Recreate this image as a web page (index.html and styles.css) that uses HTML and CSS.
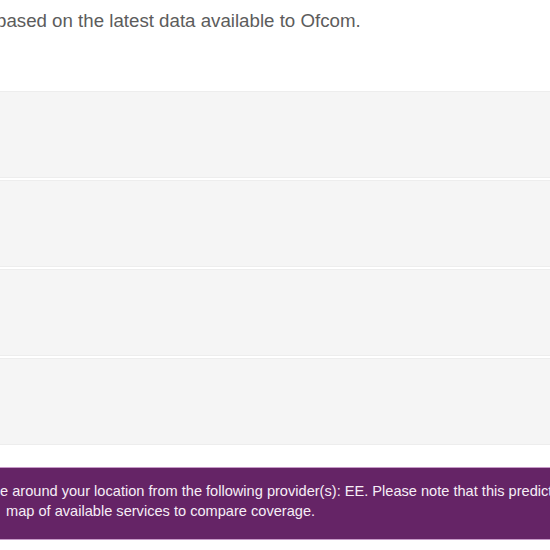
FILE: index.html
```html
<!DOCTYPE html>
<html>
<head>
<meta charset="utf-8">
<link rel="stylesheet" href="styles.css">
</head>
<body>
<div class="page">
  <p class="intro">based on the latest data available to Ofcom.</p>
  <div class="rows">
    <div class="row"></div>
    <div class="row"></div>
    <div class="row"></div>
    <div class="row"></div>
  </div>
  <div class="notice">
    <span class="line first">e around your location from the following provider(s): EE. Please note that this prediction</span>
    <span class="line second">map of available services to compare coverage.</span>
  </div>
</div>
</body>
</html>
```

FILE: styles.css
```css
html, body {
  margin: 0;
  padding: 0;
  background: #ffffff;
  overflow: hidden;
}
.page {
  width: 550px;
  height: 550px;
  overflow: hidden;
  font-family: "Liberation Sans", Arial, sans-serif;
}
.intro {
  margin: 0;
  padding-top: 10px;
  font-size: 18.7px;
  line-height: 22px;
  color: #5c5c5c;
  white-space: nowrap;
  text-indent: -4px;
}
.rows {
  margin-top: 59px;
  display: flex;
  flex-direction: column;
  gap: 2px;
}
.row {
  height: 85px;
  background: #f5f5f5;
  border-top: 1px solid #ededed;
  border-bottom: 1px solid #ededed;
}
.notice {
  margin-top: 22px;
  background: #652466;
  border-top: 1px solid #c79ac8;
  border-bottom: 1px solid #c79ac8;
  color: #f6eef6;
  font-size: 14.6px;
  line-height: 20px;
  padding-top: 13px;
  box-sizing: border-box;
  height: 73px;
}
.line {
  display: block;
  white-space: nowrap;
}
.first {
  text-indent: 0px;
}
.second {
  text-indent: 6px;
}
```
